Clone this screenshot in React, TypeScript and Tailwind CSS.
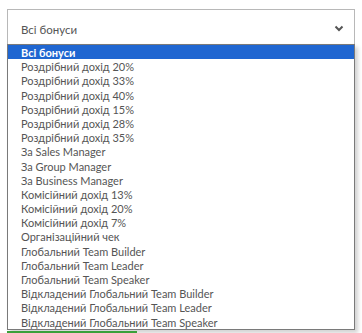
import React from 'react'

const options = [
  'Всі бонуси',
  'Роздрібний дохід 20%',
  'Роздрібний дохід 33%',
  'Роздрібний дохід 40%',
  'Роздрібний дохід 15%',
  'Роздрібний дохід 28%',
  'Роздрібний дохід 35%',
  'За Sales Manager',
  'За Group Manager',
  'За Business Manager',
  'Комісійний дохід 13%',
  'Комісійний дохід 20%',
  'Комісійний дохід 7%',
  'Організаційний чек',
  'Глобальний Team Builder',
  'Глобальний Team Leader',
  'Глобальний Team Speaker',
  'Відкладений Глобальний Team Builder',
  'Відкладений Глобальний Team Leader',
  'Відкладений Глобальний Team Speaker'
]

export default function App() {
  return (
    <div
      className="w-[362px] h-[333px] bg-white pl-[7px] pt-[9px] overflow-hidden"
      style={{ fontFamily: '"Lato", "Open Sans", sans-serif' }}
    >
      <div className="relative w-[348px]">
        {/* closed select */}
        <div className="h-[35px] border border-[#b8b8b8] border-b-0 bg-white flex items-center justify-between pl-[13px] pr-[10px] pt-[5px]">
          <span className="text-[11.5px] text-[#555]">Всі бонуси</span>
          <svg width="10" height="7" viewBox="0 0 10 7" className="mt-[-2px]">
            <path d="M1.5 1.5 L5 5 L8.5 1.5" fill="none" stroke="#555" strokeWidth="2" />
          </svg>
        </div>
        {/* open list */}
        <div className="border border-[#7a7a7a] bg-white shadow-[3px_3px_4px_rgba(0,0,0,0.18)]">
          {options.map((o, i) => (
            <div
              key={o}
              className={`h-[14.2px] leading-[15px] pl-[13px] text-[11px] whitespace-nowrap ${
                i === 0 ? 'bg-[#1f66d1] text-white font-bold' : 'text-[#555]'
              }`}
            >
              {o}
            </div>
          ))}
        </div>
        <div className="h-[3px] w-[130px] bg-[#3aa03a] mt-[1px]" />
      </div>
    </div>
  )
}
